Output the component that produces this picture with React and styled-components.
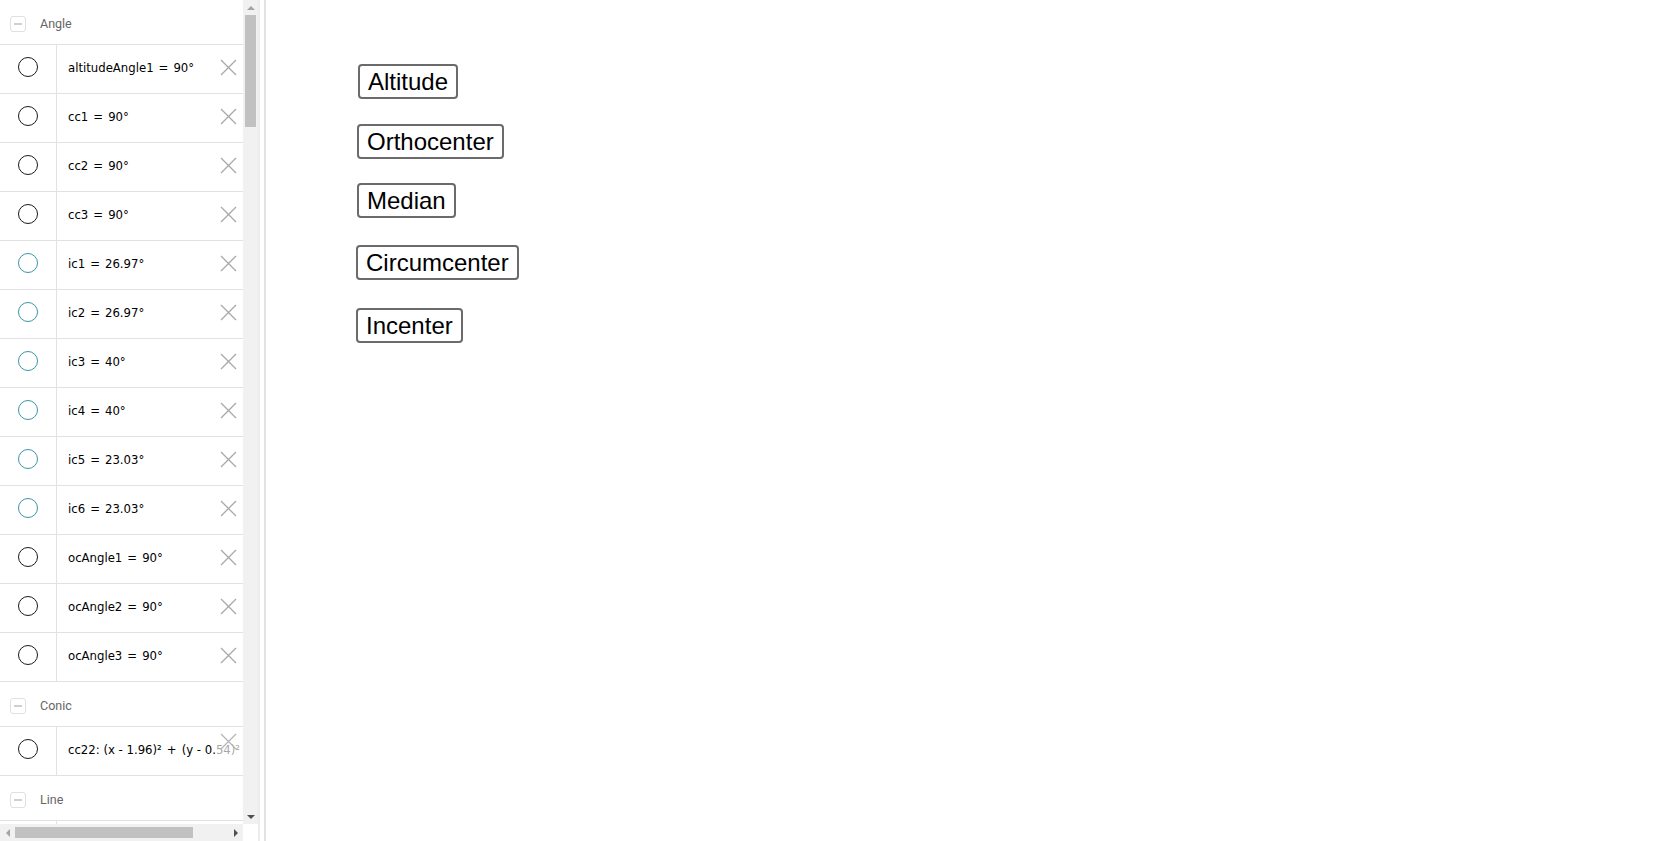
import React from "react";
import styled, { createGlobalStyle } from "styled-components";

const Global = createGlobalStyle`
  html, body { margin: 0; padding: 0; height: 100%; overflow: hidden; background: #fff; }
  #root { height: 100%; }
`;

const Page = styled.div`
  display: flex;
  width: 100vw;
  height: 100vh;
  background: #fff;
`;

const AlgebraPanel = styled.div`
  flex: none;
  width: 258px;
  display: grid;
  grid-template-columns: 243px 15px;
  grid-template-rows: 1fr 17px;
`;

const List = styled.div`
  overflow: hidden;
  background: #fff;
`;

const GroupHeader = styled.div`
  height: 45px;
  box-sizing: border-box;
  border-bottom: 1px solid #e2e2e2;
  display: flex;
  align-items: center;
  gap: 14px;
  padding: 3px 0 0 10px;
  font-family: Roboto, "Liberation Sans", sans-serif;
  font-size: 12.5px;
  color: #666;
`;

const Toggle = styled.span`
  width: 16px;
  height: 16px;
  box-sizing: border-box;
  border: 1px solid #e0e0e0;
  border-radius: 3px;
  display: flex;
  align-items: center;
  justify-content: center;
  &::after {
    content: "";
    width: 8px;
    height: 2px;
    background: #cfcfcf;
  }
`;

const Row = styled.div`
  position: relative;
  display: flex;
  height: 49px;
  box-sizing: border-box;
  border-bottom: 1px solid #e2e2e2;
`;

const MarbleCell = styled.div`
  flex: none;
  width: 56px;
  border-right: 1px solid #e2e2e2;
  display: flex;
  align-items: center;
  justify-content: center;
  padding-bottom: 4px;
`;

const Marble = styled.span`
  width: 20px;
  height: 20px;
  box-sizing: border-box;
  border-radius: 50%;
  border: 1.3px solid ${(p) => p.$color};
`;

const Formula = styled.div`
  flex: 1;
  position: relative;
  display: flex;
  align-items: center;
  padding: 0 0 4px 11px;
  white-space: nowrap;
  font-family: "DejaVu Sans Condensed", "Liberation Sans Narrow", Lato, sans-serif;
  font-size: 13px;
  color: #000;
`;

const Eq = styled.span`
  margin: 0 5px;
`;

const DeleteButton = styled.span`
  position: absolute;
  right: 2px;
  top: ${(p) => (p.$raised ? 4 : 7)}px;
  width: 25px;
  height: 30px;
  display: flex;
  align-items: ${(p) => (p.$raised ? "flex-start" : "center")};
  padding-top: ${(p) => (p.$raised ? 2 : 0)}px;
  box-sizing: border-box;
  justify-content: center;
  background: rgba(255, 255, 255, 0.65);
`;

const VScroll = styled.div`
  background: #f1f1f1;
  display: flex;
  flex-direction: column;
  align-items: center;
`;

const HScroll = styled.div`
  background: #f1f1f1;
  display: flex;
  align-items: center;
`;

const ArrowBtn = styled.span`
  flex: none;
  width: 15px;
  height: ${(p) => (p.$v ? 15 : 17)}px;
  display: flex;
  align-items: center;
  justify-content: center;
`;

const VThumb = styled.span`
  width: 11px;
  height: 112px;
  background: #c1c1c1;
`;

const HThumb = styled.span`
  width: 178px;
  height: 11px;
  background: #c1c1c1;
`;

const Spacer = styled.span`
  flex: 1;
`;

const Corner = styled.div`
  background: #fff;
`;

const Splitter = styled.div`
  flex: none;
  width: 4px;
  border-left: 2px solid #ececec;
  border-right: 2px solid #e2e2e2;
`;

const Graphics = styled.div`
  flex: 1;
  position: relative;
  background: #fff;
`;

const CanvasButton = styled.button`
  position: absolute;
  box-sizing: border-box;
  height: 35px;
  padding: 0 8px;
  border: 2px solid #6b6b6b;
  border-radius: 4px;
  background: #fff;
  color: #000;
  font-family: "Liberation Sans", Arial, sans-serif;
  font-size: 24px;
  line-height: 31px;
  white-space: nowrap;
  cursor: pointer;
`;

const Cross = ({ color = "#a8a8a8" }) => (
  <svg width="17" height="17" viewBox="0 0 17 17">
    <path d="M1 1 L16 16 M16 1 L1 16" stroke={color} strokeWidth="1.3" fill="none" />
  </svg>
);

const Tri = ({ dir, color }) => {
  const d = {
    up: "M0 5 L4 1 L8 5 Z",
    down: "M0 1 L8 1 L4 5 Z",
    left: "M5 0 L5 8 L1 4 Z",
    right: "M1 0 L5 4 L1 8 Z",
  }[dir];
  const vert = dir === "up" || dir === "down";
  return (
    <svg width={vert ? 8 : 6} height={vert ? 6 : 8} viewBox={vert ? "0 0 8 6" : "0 0 6 8"}>
      <path d={d} fill={color} />
    </svg>
  );
};

const BLACK = "#1a1a1a";
const TEAL = "#3a95a5";

const angles = [
  ["altitudeAngle1", "90°", BLACK],
  ["cc1", "90°", BLACK],
  ["cc2", "90°", BLACK],
  ["cc3", "90°", BLACK],
  ["ic1", "26.97°", TEAL],
  ["ic2", "26.97°", TEAL],
  ["ic3", "40°", TEAL],
  ["ic4", "40°", TEAL],
  ["ic5", "23.03°", TEAL],
  ["ic6", "23.03°", TEAL],
  ["ocAngle1", "90°", BLACK],
  ["ocAngle2", "90°", BLACK],
  ["ocAngle3", "90°", BLACK],
];

const buttons = [
  { label: "Altitude", left: 92, top: 64 },
  { label: "Orthocenter", left: 91, top: 124 },
  { label: "Median", left: 91, top: 183 },
  { label: "Circumcenter", left: 90, top: 245 },
  { label: "Incenter", left: 90, top: 308 },
];

const Header = ({ children }) => (
  <GroupHeader>
    <Toggle />
    <span>{children}</span>
  </GroupHeader>
);

export default function App() {
  return (
    <>
      <Global />
      <Page>
        <AlgebraPanel>
          <List>
            <Header>Angle</Header>
            {angles.map(([name, val, color]) => (
              <Row key={name}>
                <MarbleCell>
                  <Marble $color={color} />
                </MarbleCell>
                <Formula>
                  {name}
                  <Eq>=</Eq>
                  {val}
                </Formula>
                <DeleteButton>
                  <Cross />
                </DeleteButton>
              </Row>
            ))}
            <Header>Conic</Header>
            <Row>
              <MarbleCell>
                <Marble $color={BLACK} />
              </MarbleCell>
              <Formula>
                cc22: (x - 1.96)²<Eq>+</Eq>(y - 0.54)²<Eq>=</Eq>3.72
              </Formula>
              <DeleteButton $raised>
                <Cross color="#b5b5b5" />
              </DeleteButton>
            </Row>
            <Header>Line</Header>
            <Row>
              <MarbleCell>
                <Marble $color={BLACK} />
              </MarbleCell>
              <Formula />
            </Row>
          </List>
          <VScroll>
            <ArrowBtn $v>
              <Tri dir="up" color="#a3a3a3" />
            </ArrowBtn>
            <VThumb />
            <Spacer />
            <ArrowBtn $v>
              <Tri dir="down" color="#505050" />
            </ArrowBtn>
          </VScroll>
          <HScroll>
            <ArrowBtn>
              <Tri dir="left" color="#a3a3a3" />
            </ArrowBtn>
            <HThumb />
            <Spacer />
            <ArrowBtn>
              <Tri dir="right" color="#505050" />
            </ArrowBtn>
          </HScroll>
          <Corner />
        </AlgebraPanel>
        <Splitter />
        <Graphics>
          {buttons.map((b) => (
            <CanvasButton key={b.label} style={{ left: b.left, top: b.top }}>
              {b.label}
            </CanvasButton>
          ))}
        </Graphics>
      </Page>
    </>
  );
}
